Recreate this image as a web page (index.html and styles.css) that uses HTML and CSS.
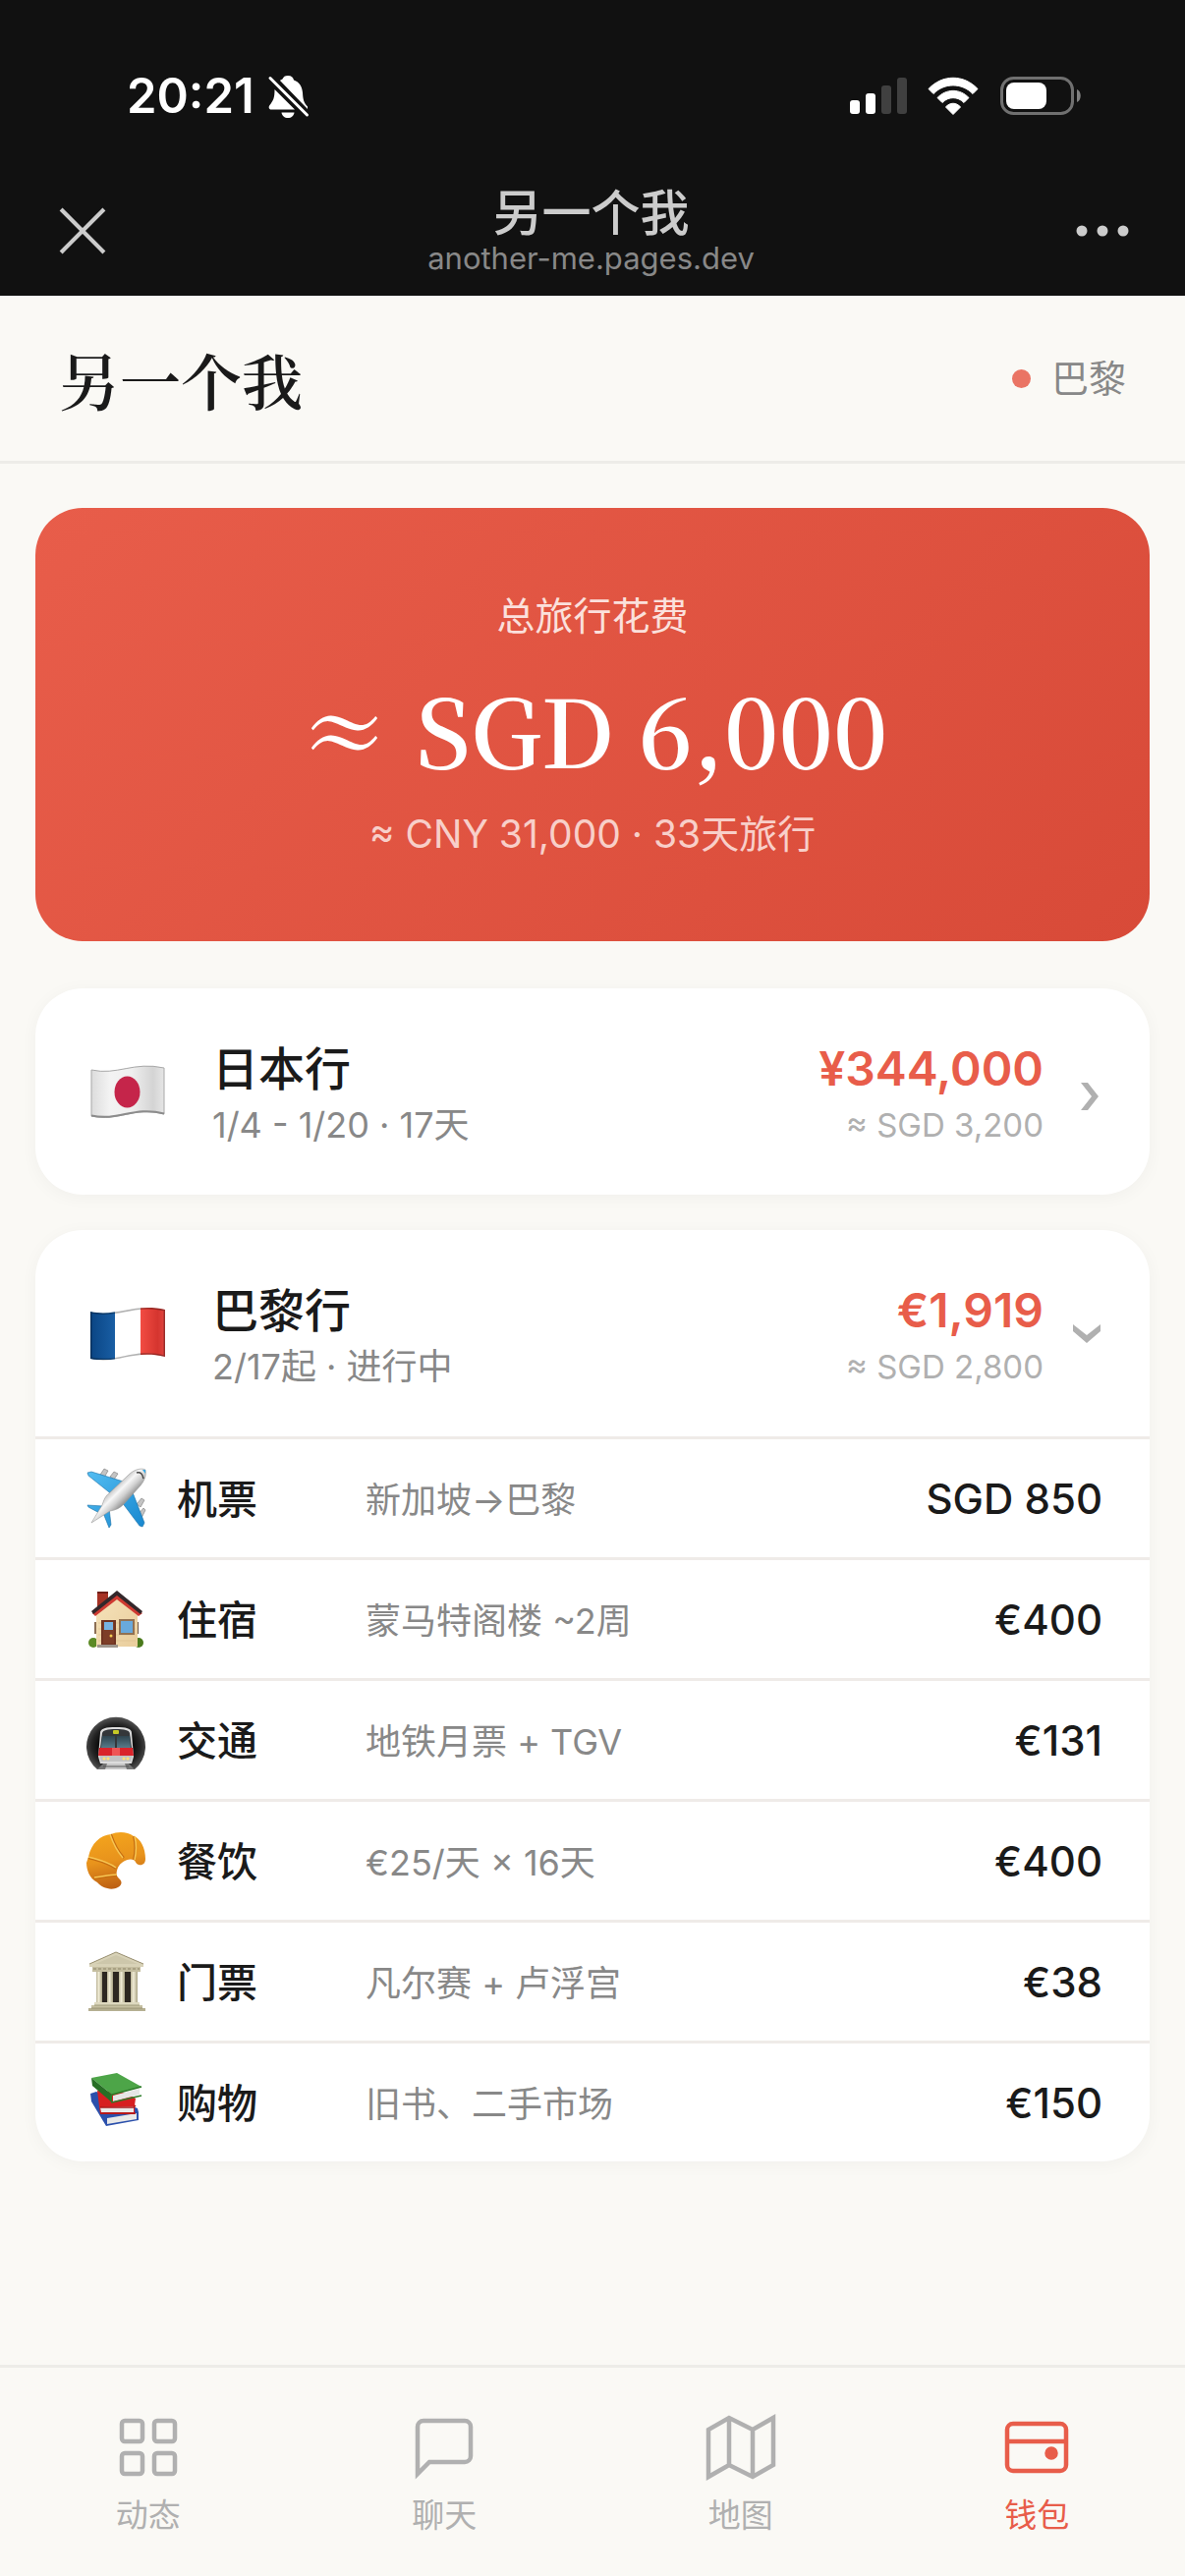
FILE: index.html
```html
<!DOCTYPE html>
<html lang="zh-CN">
<head>
<meta charset="utf-8">
<meta name="viewport" content="width=device-width, initial-scale=1">
<title>另一个我</title>
<link rel="stylesheet" href="styles.css">
</head>
<body>
<div class="app">
  <div class="chrome">
    <div class="status">
      <div class="status-time">
        <span>20:21</span>
        <svg class="bell" viewBox="0 0 42 44" aria-hidden="true">
          <path d="M20 1c3.500 0 5.500 2 6 4.500 6 2 8.500 7 9 13 .4 7 1 9.500 5 14v2.500L12 6c1-1 2.500-1.500 2.500-1.500C15.500 2 17 1 20 1z" fill="#fff"/>
          <path d="M6.500 15 27 35.500H3c-2.500 0-3-2.500-1.500-4.500C5 26.500 6.500 24 6.500 15z" fill="#fff"/>
          <path d="M13.500 38.500h13c-.5 3.500-3 5.500-6.500 5.500s-6-2-6.500-5.500z" fill="#fff"/>
          <path d="M2 3.500 39.500 41" stroke="#111" stroke-width="7"/>
          <path d="M2 3.500 39.500 41" stroke="#fff" stroke-width="3" stroke-linecap="round"/>
        </svg>
      </div>
      <div class="status-icons">
        <svg class="signal" viewBox="0 0 58 38" aria-hidden="true">
          <rect x="0" y="23" width="10" height="14" rx="3" fill="#fff"/>
          <rect x="16" y="16" width="10" height="21" rx="3" fill="#fff"/>
          <rect x="32" y="8" width="10" height="29" rx="3" fill="#404040"/>
          <rect x="48" y="0" width="10" height="37" rx="3" fill="#404040"/>
        </svg>
        <svg class="wifi" viewBox="0 0 52 38" aria-hidden="true">
          <path d="M1 11.500C15-3.500 37-3.500 51 11.500L46 16.500C35 5 17 5 6 16.500z" fill="#fff" stroke="#fff" stroke-linejoin="round"/>
          <path d="M10 20.500c9-9.500 23-9.500 32 0l-5 5c-6-6.500-16-6.500-22 0z" fill="#fff" stroke="#fff" stroke-linejoin="round"/>
          <path d="M18.500 30c4-5 11-5 15 0L26 37.500z" fill="#fff" stroke="#fff" stroke-linejoin="round"/>
        </svg>
        <svg class="battery" viewBox="0 0 84 40" aria-hidden="true">
          <rect x="2.500" y="1.500" width="72" height="36" rx="12" fill="none" stroke="#707070" stroke-width="3"/>
          <rect x="7" y="6" width="41" height="27" rx="8" fill="#fff"/>
          <path d="M79 13c5 2 5 11 0 13z" fill="#808080"/>
        </svg>
      </div>
    </div>
    <div class="browser-bar">
      <button class="bar-button" type="button" aria-label="关闭">
        <svg class="close-icon" viewBox="0 0 46 46"><path d="M2 2l42 42M44 2 2 44" stroke="#ccc" stroke-width="4" fill="none"/></svg>
      </button>
      <div class="page-id">
        <span class="page-title">另一个我</span>
        <span class="page-url">another-me.pages.dev</span>
      </div>
      <button class="bar-button" type="button" aria-label="更多">
        <svg class="more-icon" viewBox="0 0 54 12"><g fill="#ccc"><circle cx="6" cy="6" r="5.500"/><circle cx="27" cy="6" r="5.500"/><circle cx="48" cy="6" r="5.500"/></g></svg>
      </button>
    </div>
  </div>

  <header class="header">
    <h1 class="brand">另一个我</h1>
    <div class="place"><span class="place-dot"></span><span>巴黎</span></div>
  </header>

  <main class="content">
    <section class="total">
      <p class="total-text total-label">总旅行花费</p>
      <p class="total-amount">≈ SGD 6,000</p>
      <p class="total-text total-sub">≈ CNY 31,000 · 33天旅行</p>
    </section>

    <section class="trip">
      <button class="trip-head" type="button" aria-expanded="false">
        <svg class="flag" viewBox="0 0 76 54" aria-hidden="true">
          <defs>
            <linearGradient id="jp" x1="0" x2="1" y1="0" y2="0"><stop offset="0" stop-color="#dcdcdc"/><stop offset=".25" stop-color="#f3f3f3"/><stop offset=".55" stop-color="#efefef"/><stop offset=".85" stop-color="#d4d4d4"/><stop offset="1" stop-color="#e6e6e6"/></linearGradient>
          </defs>
          <path d="M1 5c26 6 43-9 74-2v47c-31-8-46 8-74 2z" fill="url(#jp)" stroke="#a8a8a8" stroke-width="1"/>
          <path d="M1 51.500c28 6 43-10 74-2" fill="none" stroke="#8c8c8c" stroke-width="2"/>
          <ellipse cx="37.500" cy="27.500" rx="13" ry="16" fill="#c5254a"/>
        </svg>
        <span class="trip-info"><span class="trip-name">日本行</span><span class="trip-dates">1/4 - 1/20 · 17天</span></span>
        <span class="trip-cost"><span class="cost-main">¥344,000</span><span class="cost-sub">≈ SGD 3,200</span></span>
        <svg class="chevron" viewBox="0 0 30 40" aria-hidden="true"><path d="M8 11l11 14L8 39h7l11-14-11-14z" fill="#b0b0b0"/></svg>
      </button>
    </section>

    <section class="trip">
      <button class="trip-head" type="button" aria-expanded="true" aria-controls="paris-costs">
        <svg class="flag" viewBox="0 0 76 54" aria-hidden="true">
          <defs>
            <clipPath id="wave"><path d="M0 5c26 6 44-9 76-2v48c-32-8-48 8-76 2z"/></clipPath>
            <linearGradient id="fb" x1="0" x2="1" y1="0" y2="0"><stop offset="0" stop-color="#0a4584"/><stop offset="1" stop-color="#195ea4"/></linearGradient>
            <linearGradient id="fr" x1="0" x2="1" y1="0" y2="0"><stop offset="0" stop-color="#f24c43"/><stop offset=".7" stop-color="#d5352f"/><stop offset="1" stop-color="#e04540"/></linearGradient>
          </defs>
          <g clip-path="url(#wave)">
            <rect width="76" height="54" fill="#fff"/>
            <rect width="25" height="54" fill="url(#fb)"/>
            <rect x="51" width="25" height="54" fill="url(#fr)"/>
            <path d="M0 5c26 6 44-9 76-2v48c-32-8-48 8-76 2z" fill="none" stroke="#000" stroke-opacity=".3" stroke-width="3"/>
          </g>
        </svg>
        <span class="trip-info"><span class="trip-name">巴黎行</span><span class="trip-dates">2/17起 · 进行中</span></span>
        <span class="trip-cost"><span class="cost-main">€1,919</span><span class="cost-sub">≈ SGD 2,800</span></span>
        <svg class="chevron" viewBox="0 0 30 40" aria-hidden="true"><path d="M0 11l14 11 14-11v7L14 30 0 18z" fill="#b0b0b0"/></svg>
      </button>
      <table class="costs" id="paris-costs">
        <tbody>
          <tr>
            <td class="col-icon"><svg class="emoji" viewBox="0 0 60 60" aria-hidden="true">
              <defs>
                <linearGradient id="pb" x1="0" y1="0" x2="1" y2="1"><stop offset="0" stop-color="#53bdf2"/><stop offset="1" stop-color="#1787cf"/></linearGradient>
                <linearGradient id="pf" x1=".3" y1=".3" x2=".7" y2=".7"><stop offset=".1" stop-color="#aaa"/><stop offset=".4" stop-color="#f7f7f7"/><stop offset=".6" stop-color="#d0d0d0"/><stop offset=".9" stop-color="#777"/></linearGradient>
              </defs>
              <g stroke="#777" stroke-width=".6" fill="#c4c4c4"><path d="M14 6l4-6 4 2-4 7zM24 8l4-5 4 2-4 6zM51 36l5-6 3 2-4 7zM53 46l5-6 2 2-4 8z"/></g>
              <path d="M1 4l4-1 36 11-14 13L2 7zM45 19l14 36-2 4-3-1L36 34zM1 37l16 1-2 8L2 39zM17 45l6-5 2 17-2 3z" fill="url(#pb)" stroke="#1a6fa5" stroke-width=".6"/>
              <path d="M5 55l11-18c2-6 3-9 8-13L43 6c6-6 14-7 17-5 1 4 0 10-5 16L38 36c-4 4-8 6-14 7z" fill="url(#pf)" stroke="#999" stroke-width=".6"/>
              <path d="M51 4c4-1 6 1 7 6" fill="none" stroke="#444" stroke-width="1.500"/><path d="M57 1h3v4z" fill="#39a9e4"/>
            </svg></td>
            <th class="col-name" scope="row">机票</th>
            <td class="col-note">新加坡→巴黎</td>
            <td class="col-cost">SGD 850</td>
          </tr>
          <tr>
            <td class="col-icon"><svg class="emoji" viewBox="0 0 60 60" aria-hidden="true">
              <defs><linearGradient id="hw" x1="0" y1="0" x2="1" y2="1"><stop offset="0" stop-color="#f6e3bb"/><stop offset="1" stop-color="#e9cd9c"/></linearGradient></defs>
              <rect x="8" y="33" width="3" height="12" fill="#8b6f55"/><rect x="51" y="33" width="2" height="12" fill="#6e5644"/>
              <ellipse cx="7" cy="54" rx="5" ry="5" fill="#5c8a26"/><ellipse cx="53" cy="54" rx="5" ry="5" fill="#4a7a1c"/>
              <rect x="11" y="2" width="11" height="17" fill="#a53124"/><path d="M11 2h11v2H11z" fill="#6f1e18"/>
              <path d="M10 24 31 5l21 19v34H10z" fill="url(#hw)"/>
              <path d="M12 34h38M12 40h38M12 46h38M12 52h38" stroke="#dcc08e" stroke-width=".6"/>
              <path d="M31 5 6 24l3 3L31 10l22 17 4-3z" fill="#cf3b32"/>
              <path d="M31 1 5 22l2 3L31 6l24 19 2-3z" fill="#33272a"/>
              <path d="M15 31h15v25H15z" fill="#6f3422"/><path d="M17 33h11v22H17z" fill="#7d3e28"/><path d="M18 33h9v8h-9z" fill="#76b3e2"/><circle cx="25" cy="47" r="1.500" fill="#f4cb50"/>
              <path d="M33 30h16v16H33z" fill="#927152"/><path d="M35 32h12v12H35z" fill="#69a9dc"/>
              <path d="M11 56h21v3H11z" fill="#9e958c"/>
            </svg></td>
            <th class="col-name" scope="row">住宿</th>
            <td class="col-note">蒙马特阁楼 ~2周</td>
            <td class="col-cost">€400</td>
          </tr>
          <tr>
            <td class="col-icon"><svg class="emoji" viewBox="0 0 60 60" aria-hidden="true">
              <defs>
                <radialGradient id="mt" cx=".5" cy=".55" r=".55"><stop offset=".5" stop-color="#080808"/><stop offset=".75" stop-color="#252525"/><stop offset="1" stop-color="#555"/></radialGradient>
                <linearGradient id="mg" x1="0" y1="0" x2="0" y2="1"><stop offset="0" stop-color="#2f444e"/><stop offset="1" stop-color="#577a89"/></linearGradient>
              </defs>
              <path d="M11 60a30 30 0 1 1 38 0z" fill="url(#mt)"/>
              <path d="M17 54h26l6 6H11z" fill="#777"/><path d="M21 54h18l2 6H19z" fill="#c8c8c8"/><path d="M17 57h26" stroke="#555"/>
              <path d="M14 23c0-5 6-6 16-6s16 1 16 6l2 24-2 7H14l-2-7z" fill="#ddd"/>
              <path d="M16 23c1-3 5-4 14-4s13 1 14 4l2 15H14z" fill="#34373a"/>
              <path d="M16 26h13v12H15zM31 26h13l1 12H31z" fill="url(#mg)"/><rect x="27" y="20" width="6" height="4" rx="1" fill="#c6c927"/>
              <path d="M13 38h34l1 8H12z" fill="#d9242b"/><path d="M26 38h8v8h-8z" fill="#ef5555"/>
              <path d="M13 46h34l-2 6H15z" fill="#c3c3c3"/><g fill="#ffe27a"><circle cx="18" cy="49" r="1.500"/><circle cx="22" cy="49" r="1.500"/><circle cx="38" cy="49" r="1.500"/><circle cx="42" cy="49" r="1.500"/></g>
            </svg></td>
            <th class="col-name" scope="row">交通</th>
            <td class="col-note">地铁月票 + TGV</td>
            <td class="col-cost">€131</td>
          </tr>
          <tr>
            <td class="col-icon"><svg class="emoji" viewBox="0 0 60 60" aria-hidden="true">
              <defs><linearGradient id="cr" x1=".3" y1="0" x2=".5" y2="1"><stop offset="0" stop-color="#f4a51d"/><stop offset=".5" stop-color="#e8931c"/><stop offset="1" stop-color="#bb5d12"/></linearGradient></defs>
              <path d="M2 26C5 12 14 4 25 3c6-3 17-3 23 2 7 2 12 12 12 23 0 5-3 7-7 6-3-1-3-4-5-5-6-2-13 2-16 8-2 5-2 8 1 11 4 3 3 7-1 9-7 4-17 0-21-5C3 48 0 39 0 32z" fill="url(#cr)"/>
              <path d="M25 3c3 9 7 17 13 24M2 27c10 3 20 5 28 11M8 48c8-1 16-3 23-3M48 5c2 8 2 15 0 24" fill="none" stroke="#c46c11" stroke-width="2"/>
              <path d="M24 3c3 9 7 17 13 24M2 26c10 3 20 5 28 11M8 47c8-1 16-3 23-3M49 5c2 8 2 15 0 24" fill="none" stroke="#f7c653" stroke-width="1.500"/>
            </svg></td>
            <th class="col-name" scope="row">餐饮</th>
            <td class="col-note">€25/天 × 16天</td>
            <td class="col-cost">€400</td>
          </tr>
          <tr>
            <td class="col-icon"><svg class="emoji" viewBox="0 0 60 60" aria-hidden="true">
              <defs><linearGradient id="mc" x1="0" y1="0" x2="1" y2="0"><stop offset="0" stop-color="#b9b395"/><stop offset=".4" stop-color="#f1ecd6"/><stop offset="1" stop-color="#aaa485"/></linearGradient></defs>
              <path d="M11 18h40v34H11z" fill="#2d2721"/>
              <g fill="url(#mc)"><path d="M10 20h6v31h-6z"/><path d="M21 20h6v31h-6z"/><path d="M33 20h6v31h-6z"/><path d="M45 20h7v31h-7z"/></g>
              <path d="M30 0 3 12v3h55v-3z" fill="#d8d2b7"/><path d="M30 3 9 12h43z" fill="#cdc7ab"/><path d="M30 0 3 12M30 0l28 12" stroke="#988f70"/>
              <path d="M6 15h49v5H6z" fill="#c5bea0"/><path d="M7 17h47" stroke="#8d8568" stroke-dasharray="3 2"/>
              <path d="M8 51h46v3H8z" fill="#ded9bf"/><path d="M5 54h52v3H5z" fill="#c6c0a2"/><path d="M2 57h58v3H2z" fill="#b5af91"/><path d="M8 54h46M5 57h52" stroke="#8e8769" stroke-width=".7"/>
            </svg></td>
            <th class="col-name" scope="row">门票</th>
            <td class="col-note">凡尔赛 + 卢浮宫</td>
            <td class="col-cost">€38</td>
          </tr>
          <tr>
            <td class="col-icon"><svg class="emoji" viewBox="0 0 60 60" aria-hidden="true">
              <path d="M4 21l6-2 42 17 1 4v8l-33 6L5 29z" fill="#2b50ac"/><path d="M21 46l30-5v6l-30 5z" fill="#e8e8e8"/>
              <path d="M11 18l3 24h35V33l1-7-10-6z" fill="#d71f21"/><path d="M14 35l34-1v6H15z" fill="#eaeaea"/><path d="M14 35h34l2-2M14 41h36" stroke="#ad1718" stroke-width="1.500" fill="none"/>
              <path d="M5 5 31 0l25 14-30 8z" fill="#4da548"/><path d="M5 5 26 22v8L6 13z" fill="#276f25"/><path d="M27 23l27-7v6l-27 7z" fill="#e6e6e6"/><path d="M56 14l-30 8c-2 3-1 6 0 8l30-7" fill="none" stroke="#2d7c2a" stroke-width="1.500"/>
            </svg></td>
            <th class="col-name" scope="row">购物</th>
            <td class="col-note">旧书、二手市场</td>
            <td class="col-cost">€150</td>
          </tr>
        </tbody>
      </table>
    </section>
  </main>

  <nav class="tabs">
    <a class="tab" href="#feed">
      <svg class="tab-icon" viewBox="0 0 24 24" aria-hidden="true"><rect x="3" y="3" width="7" height="7" rx="1"/><rect x="14" y="3" width="7" height="7" rx="1"/><rect x="3" y="14" width="7" height="7" rx="1"/><rect x="14" y="14" width="7" height="7" rx="1"/></svg>
      <span>动态</span>
    </a>
    <a class="tab" href="#chat">
      <svg class="tab-icon" viewBox="0 0 24 24" aria-hidden="true"><path d="M21 15a2 2 0 0 1-2 2H7l-4 4V5a2 2 0 0 1 2-2h14a2 2 0 0 1 2 2z"/></svg>
      <span>聊天</span>
    </a>
    <a class="tab" href="#map">
      <svg class="tab-icon" viewBox="0 0 24 24" aria-hidden="true"><path d="M1 6v16l7-4 8 4 7-4V2l-7 4-8-4zM8 2v16M16 6v16"/></svg>
      <span>地图</span>
    </a>
    <a class="tab tab-active" href="#wallet" aria-current="page">
      <svg class="tab-icon" viewBox="0 0 24 24" aria-hidden="true"><rect x="2" y="4" width="20" height="16" rx="2"/><path d="M2 10h20"/><circle cx="17" cy="14" r="1.500" fill="currentColor"/></svg>
      <span>钱包</span>
    </a>
  </nav>
</div>
</body>
</html>
```
FILE: styles.css
```css
* {
  box-sizing: border-box;
}

body {
  margin: 0;
  background: #faf9f5;
  color: #1a1a1a;
  font-family: Inter, "Noto Sans CJK SC", sans-serif;
}

svg {
  display: block;
  flex: none;
  overflow: visible;
}

button {
  border: 0;
  padding: 0;
  background: none;
  color: inherit;
  font: inherit;
  text-align: left;
  cursor: pointer;
}

.app {
  display: flex;
  flex-direction: column;
  min-height: 100vh;
}

/* Status bar and in-app browser bar */
.chrome {
  background: #111;
}

.status {
  display: flex;
  justify-content: space-between;
  align-items: center;
  padding: 66px 105px 0 129px;
  color: #fff;
  font-size: 49px;
  font-weight: 600;
  line-height: 64px;
}

.status-time,
.status-icons {
  display: flex;
  align-items: center;
}

.status-time {
  gap: 14px;
}

.status-icons {
  gap: 21px;
}

.bell {
  width: 42px;
  height: 44px;
}

.signal {
  width: 58px;
  height: 38px;
}

.wifi {
  width: 52px;
  height: 38px;
}

.battery {
  width: 84px;
  height: 40px;
}

.browser-bar {
  display: flex;
  justify-content: space-between;
  align-items: center;
  height: 171px;
  padding: 38px 57px 0 60px;
}

.bar-button {
  display: flex;
  align-items: center;
  height: 80px;
}

.close-icon {
  width: 48px;
  height: 48px;
}

.more-icon {
  width: 54px;
  height: 12px;
}

.page-id {
  display: flex;
  flex-direction: column;
  align-items: center;
}

.page-title {
  color: #ccc;
  font-size: 50px;
  font-weight: 500;
  line-height: 56px;
}

.page-url {
  color: #888;
  font-size: 31px;
  line-height: 36px;
}

/* App header */
.header {
  display: flex;
  justify-content: space-between;
  align-items: center;
  height: 171px;
  padding: 0 60px;
  border-bottom: 3px solid #edece8;
}

.brand {
  margin: 0;
  padding-top: 4px;
  font-family: "Noto Serif CJK SC", "Noto Serif SC", serif;
  font-size: 62px;
  font-weight: 600;
  line-height: 90px;
}

.place {
  display: flex;
  align-items: center;
  gap: 21px;
  color: #888;
  font-size: 38px;
  line-height: 54px;
}

.place-dot {
  width: 19px;
  height: 19px;
  border-radius: 50%;
  background: #ea7464;
}

/* Content */
.content {
  flex: 1;
  padding: 45px 36px;
}

.total {
  padding: 81px 48px;
  border-radius: 48px;
  background: linear-gradient(135deg, #e85d4a, #d84a38);
  color: #fff;
  text-align: center;
}

.total-text,
.total-amount {
  margin: 0;
}

.total-text {
  font-size: 39px;
  line-height: 57px;
}

.total-label {
  color: #fbe0dc;
}

.total-amount {
  padding: 15px 0 9px;
  font-family: "Noto Serif CJK SC", "Liberation Serif", serif;
  font-size: 96px;
  font-weight: 600;
  line-height: 141px;
}

.total-sub {
  color: #f8cfc9;
}

.trip {
  margin-top: 36px;
  border-radius: 48px;
  background: #fff;
  box-shadow: 0 3px 18px rgba(0, 0, 0, 0.04);
  overflow: hidden;
}

.total + .trip {
  margin-top: 48px;
}

.trip-head {
  display: flex;
  align-items: center;
  width: 100%;
  height: 210px;
  padding: 0 48px 0 56px;
}

.flag {
  width: 76px;
  height: 54px;
}

.trip-info,
.trip-cost {
  display: flex;
  flex-direction: column;
  padding-top: 8px;
}

.trip-info {
  flex: 1;
  padding-left: 48px;
}

.trip-cost {
  align-items: flex-end;
  padding-right: 30px;
}

.trip-name,
.cost-main {
  font-size: 48px;
  line-height: 60px;
}

.trip-name {
  font-size: 47px;
  font-weight: 500;
}

.cost-main {
  color: #e85d4a;
  font-weight: 600;
}

.trip-dates,
.cost-sub {
  line-height: 54px;
}

.trip-dates {
  color: #888;
  font-size: 36px;
}

.cost-sub {
  color: #b0b0b0;
  font-size: 33px;
}

.chevron {
  width: 30px;
  height: 40px;
}

.costs {
  width: 100%;
  border-spacing: 0;
  table-layout: fixed;
}

.costs td,
.costs th {
  height: 123px;
  padding: 0;
  border-top: 3px solid #efebe8;
  text-align: left;
  vertical-align: middle;
}

.costs .col-icon {
  width: 144px;
  padding-left: 52px;
}

.emoji {
  width: 60px;
  height: 60px;
}

.costs .col-name {
  width: 192px;
  padding-bottom: 4px;
  font-size: 41px;
  font-weight: 500;
}

.costs .col-note {
  padding-bottom: 2px;
  color: #888;
  font-size: 36px;
}

.costs .col-cost {
  width: 260px;
  padding-right: 48px;
  font-size: 42px;
  font-weight: 500;
  text-align: right;
}

/* Bottom tabs */
.tabs {
  display: grid;
  grid-template-columns: repeat(4, 1fr);
  height: 215px;
  border-top: 3px solid #edece8;
}

.tab {
  display: flex;
  flex-direction: column;
  align-items: center;
  gap: 11px;
  padding-top: 45px;
  color: #b0b0b0;
  font-size: 33px;
  line-height: 45px;
  text-decoration: none;
}

.tab-active {
  color: #e85d4a;
}

.tab-icon {
  width: 72px;
  height: 72px;
  fill: none;
  stroke: currentColor;
  stroke-width: 1.5;
}
```
